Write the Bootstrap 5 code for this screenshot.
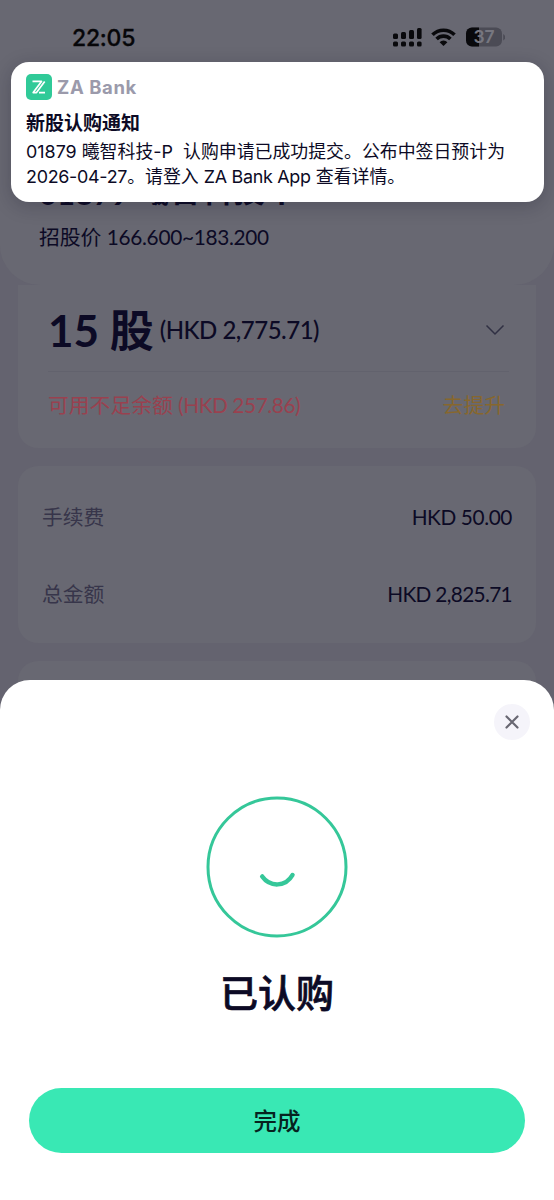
<!DOCTYPE html>
<html lang="zh-CN">
<head>
<meta charset="utf-8">
<meta name="viewport" content="width=device-width, initial-scale=1">
<title>已认购</title>
<link href="https://cdn.jsdelivr.net/npm/bootstrap@5.3.0/dist/css/bootstrap.min.css" rel="stylesheet">
<style>
body{background:#64636f;color:#0c0a25;font-family:Lato,"Noto Sans CJK SC",sans-serif;font-size:20.8px;line-height:30px}
.screen{width:554px;height:1200px}
.ui{font-family:Inter,"Noto Sans CJK SC",sans-serif}
.offer{height:285px;background:#686872;border-radius:0 0 40px 40px;z-index:1}
.statusbar{height:62px;padding:12px 49px 0 72px;color:#060609}
.clock{font-size:23px;font-weight:500;line-height:52px;letter-spacing:-.25px;-webkit-text-stroke:.3px}
.offer-name{height:40px;font-size:31px;font-weight:700;line-height:40px;margin:108px 0 0 39px;letter-spacing:.9px}
.offer-name .latin{vertical-align:-2.5px;line-height:30px;letter-spacing:.1px}
.offer-price{margin:12px 0 0 39px}
.num{letter-spacing:-.3px}
.panel{background:#686872;border-radius:20px;margin:0 18px 18px}
.amount{height:163px;padding:0 27px 0 30px;border-radius:0 0 20px 20px}
.amount-row{height:87px;border-bottom:1px solid #62626d;padding-top:4px}
.qty{font-size:44px;font-weight:700}
.hkd{font-size:24px;font-weight:500;letter-spacing:-.5px;margin-left:6px}
.short{color:#99414f}
.short .num{letter-spacing:-.42px}
.raise{color:#87672d}
.balance-row{margin-top:18px}
.fees{height:177px;padding:12px 24px}
.fees .line{height:77px}
.fee-value{letter-spacing:-.4px}
.total{letter-spacing:-.67px}
.label-dim{color:#37354a}
.notice{left:11px;top:62px;width:533px;height:140px;border-radius:18px;background:#fff;z-index:3;padding:12px 15px;box-shadow:0 4px 18px rgba(20,20,40,.25)}
.brand{height:26px;color:#9b9aab;font-size:18.5px;font-weight:700}
.brand-name{letter-spacing:.6px}
.notice-title{font-size:19px;font-weight:700;line-height:26px;margin-top:11px}
.notice-body{font-size:17.9px;line-height:24.5px;margin-top:3px;white-space:pre}
.notice-body .en{letter-spacing:-.28px}
.sheet{left:0;bottom:0;width:554px;height:520px;background:#fff;border-radius:30px 30px 0 0;z-index:2;padding:24px 24px 0}
.close-btn{width:36px;height:36px;background:#f5f4fa}
.done-title{font-size:38px;font-weight:500;line-height:56px;margin-top:10px;-webkit-text-stroke:.7px}
.done-btn,.done-btn:hover{width:496px;height:65px;background:#39e8b4;color:#06231f;font-size:23.5px;font-weight:500;margin-top:68px;border:0;padding-top:2px!important}
</style>
</head>
<body>
<main class="screen position-relative overflow-hidden mx-auto">
  <section class="offer position-relative">
    <div class="statusbar ui d-flex justify-content-between align-items-start">
      <span class="clock">22:05</span>
      <svg width="113" height="36" viewBox="392 12 113 36" class="flex-shrink-0">
        <g fill="#09090c">
          <rect x="393" y="33.5" width="5" height="5.5" rx="1.5"/><rect x="401" y="32" width="5" height="7" rx="1.5"/><rect x="409" y="30" width="5" height="9" rx="1.5"/><rect x="417" y="28" width="4.6" height="11" rx="1.5"/>
          <rect x="393" y="41.5" width="5" height="5" rx="1.5"/><rect x="401" y="41.5" width="5" height="5" rx="1.5"/><rect x="409" y="41.5" width="5" height="5" rx="1.5"/><rect x="417" y="41.5" width="4.6" height="5" rx="1.5"/>
        </g>
        <g fill="none" stroke="#09090c" stroke-width="3.6">
          <path d="M432.500 34.800a15.500 15.500 0 0 1 22 0"/><path d="M436.600 39a9.800 9.800 0 0 1 13.800 0"/>
        </g>
        <path d="M439.600 42.200a5.600 5.600 0 0 1 7.800 0l-3.900 3.900z" fill="#09090c"/>
        <rect x="466" y="27.500" width="36" height="19" rx="6" fill="#4b4b55"/>
        <path d="M479 27.500h-7a6 6 0 0 0-6 6v7a6 6 0 0 0 6 6h7z" fill="#09090c"/>
        <path d="M503.200 34v6.500q2-1 2-3.200t-2-3.300z" fill="#4b4b55"/>
        <text x="484" y="43.300" text-anchor="middle" font-family="Inter" font-size="17.500" font-weight="600" fill="#777780">37</text>
      </svg>
    </div>
    <div class="offer-name text-nowrap"><span class="latin">01879</span> 曦智科技<span class="latin">-P</span></div>
    <div class="offer-price">招股价 <span class="num">166.600~183.200</span></div>
  </section>

  <section class="panel amount">
    <div class="amount-row d-flex align-items-center">
      <span class="qty text-nowrap">15 股</span>
      <span class="hkd text-nowrap">(HKD 2,775.71)</span>
      <svg class="ms-auto me-1" width="20" height="12" viewBox="0 0 20 12" fill="none" stroke="#303043" stroke-width="1.500"><path d="M1.500 1.500 10 10l8.500-8.500"/></svg>
    </div>
    <div class="balance-row d-flex justify-content-between pe-1">
      <span class="short">可用不足余额 <span class="num">(HKD 257.86)</span></span>
      <span class="raise">去提升</span>
    </div>
  </section>

  <section class="panel fees">
    <div class="line d-flex justify-content-between align-items-center"><span class="label-dim">手续费</span><span class="fee-value">HKD 50.00</span></div>
    <div class="line d-flex justify-content-between align-items-center"><span class="label-dim">总金额</span><span class="fee-value total">HKD 2,825.71</span></div>
  </section>
  <section class="panel fees"></section>

  <aside class="notice ui position-absolute">
    <div class="brand d-flex align-items-center">
      <svg class="me-1" width="27" height="26" viewBox="0 0 27 26"><rect width="26" height="26" rx="5" fill="#30ca98"/><g fill="none" stroke="#fff" stroke-width="1.700" stroke-linejoin="round"><path d="M6.500 7.400H15.500L7.200 18.600H10.500L18.700 7.400M13 18.600H19"/></g></svg>
      <span class="brand-name">ZA Bank</span>
    </div>
    <div class="notice-title">新股认购通知</div>
    <div class="notice-body">01879 曦智科技-P  认购申请已成功提交。公布中签日预计为
<span class="en">2026-04-27</span>。请登入 <span class="en">ZA Bank App</span> 查看详情。</div>
  </aside>

  <section class="sheet position-absolute d-flex flex-column align-items-center">
    <button class="close-btn btn rounded-circle p-0 align-self-end d-flex align-items-center justify-content-center" aria-label="关闭">
      <svg width="16" height="16" viewBox="0 0 16 16" stroke="#686772" stroke-width="2.200" stroke-linecap="round"><path d="m2.500 2.500 11 11m0-11-11 11"/></svg>
    </button>
    <svg class="flex-shrink-0 mt-5 mb-2" width="142" height="158" viewBox="0 -8 142 158" fill="none" stroke="#35c799">
      <circle cx="71" cy="71" r="69" stroke-width="3"/>
      <path d="M56.200 80.500c8 11 23.500 10.500 30.300-1.500" stroke-width="4.500" stroke-linecap="round"/>
    </svg>
    <h1 class="done-title mb-0">已认购</h1>
    <button class="done-btn btn rounded-pill p-0">完成</button>
  </section>
</main>
<script src="https://cdn.jsdelivr.net/npm/bootstrap@5.3.0/dist/js/bootstrap.bundle.min.js"></script>
</body>
</html>
